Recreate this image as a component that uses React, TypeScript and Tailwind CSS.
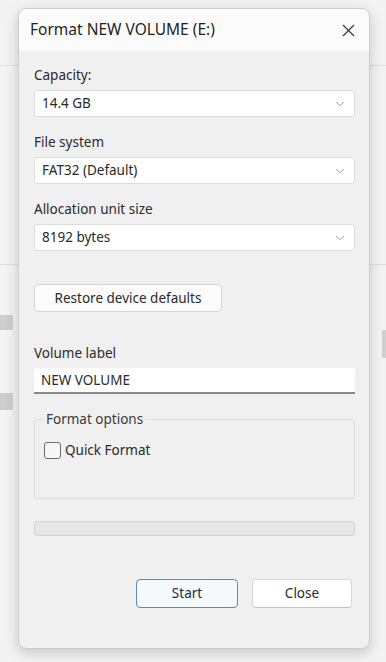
import { ChevronDown, X } from 'lucide-react'

const font = { fontFamily: '"Noto Sans", "Open Sans", sans-serif' }

function Select({ value }: { value: string }) {
  return (
    <div className="flex h-[27px] items-center justify-between rounded-[3px] border border-[#dcdcdc] bg-white pl-[7px] pr-[7px] text-[13.5px] text-[#2a2a2a]">
      <span>{value}</span>
      <ChevronDown className="h-[14px] w-[14px] text-[#8a8a8a]" strokeWidth={1.5} />
    </div>
  )
}

function Field({ label, value, first }: { label: string; value: string; first?: boolean }) {
  return (
    <div className={first ? '' : 'mt-[15px]'}>
      <div className="mb-[5px] h-[20px] text-[13.5px] leading-[20px] text-[#2a2a2a]">{label}</div>
      <Select value={value} />
    </div>
  )
}

export default function App() {
  return (
    <div className="relative h-[662px] w-[386px] overflow-hidden bg-[#f3f3f3]" style={font}>
      {/* window behind the dialog */}
      <div className="absolute left-0 top-[65px] h-px w-full bg-[#dedede]" />
      <div className="absolute left-0 top-[264px] h-px w-full bg-[#dedede]" />
      <div className="absolute left-0 top-[315px] h-[15px] w-[13px] bg-[#cdcdcd]" />
      <div className="absolute left-0 top-[393px] h-[17px] w-[13px] bg-[#cdcdcd]" />
      <div className="absolute right-0 top-[330px] h-[28px] w-[4px] bg-[#cfcfcf]" />

      <div className="relative ml-[18px] mt-[8px] flex h-[641px] w-[352px] flex-col overflow-hidden rounded-[8px] border border-[#cbcbcb] bg-[#f0f0f0] shadow-[0_4px_14px_rgba(0,0,0,0.18)]">
        <div className="flex h-[42px] shrink-0 items-center justify-between bg-[#fbfbfb] pl-[11px] pr-[10px]">
          <span className="text-[15.5px] text-[#1f1f1f]">Format NEW VOLUME (E:)</span>
          <X className="h-[21px] w-[21px] text-[#333]" strokeWidth={1.3} />
        </div>

        <div className="flex flex-1 flex-col pl-[15px] pr-[14px] pt-[14px]">
          <Field label="Capacity:" value="14.4 GB" first />
          <Field label="File system" value="FAT32 (Default)" />
          <Field label="Allocation unit size" value="8192 bytes" />

          <button className="mt-[33px] h-[28px] w-[188px] rounded-[4px] border border-[#d6d6d6] bg-[#fbfbfb] text-[13.5px] text-[#2a2a2a]">
            Restore device defaults
          </button>

          <div className="mt-[31px] mb-[5px] h-[20px] text-[13.5px] leading-[20px] text-[#2a2a2a]">Volume label</div>
          <div className="flex h-[26px] items-center rounded-t-[3px] border-b-[2px] border-b-[#8a8a8a] bg-white pl-[7px] text-[13.5px] text-[#2a2a2a]">
            NEW VOLUME
          </div>

          <fieldset className="mt-[15px] h-[90px] rounded-[3px] border border-[#dcdcdc]">
            <legend className="ml-[8px] px-[3px] text-[13.5px] leading-[20px] text-[#3a3a3a]">Format options</legend>
            <label className="mt-[11px] ml-[9px] flex items-center gap-[4px] text-[13.5px] text-[#2a2a2a]">
              <span className="h-[17px] w-[17px] rounded-[3px] border border-[#6b6b6b] bg-[#f7f7f7]" />
              Quick Format
            </label>
          </fieldset>

          <div className="mt-[22px] h-[15px] rounded-[3px] border border-[#d2d2d2] bg-[#e6e6e6]" />

          <div className="mt-[43px] flex justify-end gap-[14px] pr-[3px]">
            <button className="h-[29px] w-[102px] rounded-[4px] border-[1.5px] border-[#5a8aae] bg-[#f4f9fd] text-[13.5px] text-[#2a2a2a]">
              Start
            </button>
            <button className="h-[29px] w-[100px] rounded-[4px] border border-[#d8d8d8] border-b-[#c4c4c4] bg-white text-[13.5px] text-[#2a2a2a]">
              Close
            </button>
          </div>
        </div>
      </div>
    </div>
  )
}
